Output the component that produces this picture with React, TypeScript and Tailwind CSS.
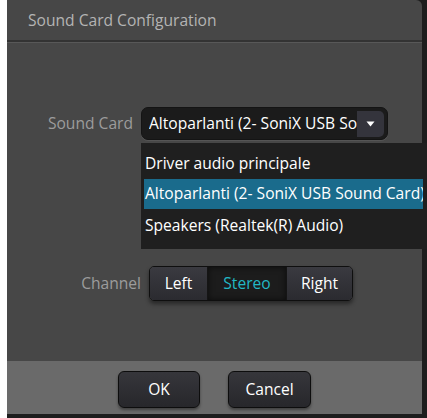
import React from "react";

const font = { fontFamily: '"Open Sans", "Noto Sans", sans-serif' };

function ComboBox() {
  return (
    <div className="relative">
      <div className="flex h-[33px] w-[247px] items-center rounded-[7px] border border-[#141414] bg-[#1b1b1b] pl-[7px] pr-[3px] shadow-[0_1px_0_#555]">
        <span className="flex-1 overflow-hidden whitespace-nowrap text-[15.6px] text-white">
          Altoparlanti (2- SoniX USB Sound Card)
        </span>
        <div className="flex h-[26px] w-[27px] shrink-0 items-center justify-center rounded-r-[5px] bg-[#34343c]">
          <svg width="9" height="6" viewBox="0 0 9 6">
            <path d="M0.5 0.5 H8.5 L4.5 5.5 Z" fill="#ffffff" />
          </svg>
        </div>
      </div>
      {/* open dropdown list */}
      <div className="absolute left-0 top-[36px] z-10 flex w-[290px] flex-col bg-[#1f1f1f] pt-[5px] pb-[6px] pl-[3px] text-[15.6px] text-white">
        <div className="flex h-[31px] items-center whitespace-nowrap pl-[1px]">Driver audio principale</div>
        <div className="flex h-[30px] w-[279px] items-center overflow-hidden whitespace-nowrap bg-[#1a6b8c] pl-[1px]">
          Altoparlanti (2- SoniX USB Sound Card)
        </div>
        <div className="flex h-[34px] items-center whitespace-nowrap pl-[1px]">Speakers (Realtek(R) Audio)</div>
      </div>
    </div>
  );
}

function Segment({ label, active, cls }: { label: string; active?: boolean; cls: string }) {
  return (
    <div
      className={
        "flex h-full items-center justify-center text-[15.6px] " +
        cls +
        (active
          ? " bg-[#1c1c1c] text-[#22b8c4] shadow-[inset_0_0_6px_rgba(0,0,0,0.6)]"
          : " bg-gradient-to-b from-[#3a3a40] to-[#2b2b30] text-white")
      }
    >
      {label}
    </div>
  );
}

export default function App() {
  return (
    <div className="h-[418px] w-[427px] overflow-hidden bg-white" style={font}>
      <div className="ml-[7px] flex h-full flex-col bg-[#1d1d1d]">
        <div className="mr-[5px] flex h-[414px] flex-col overflow-visible">
          {/* title bar */}
          <div className="flex h-[40px] shrink-0 items-center rounded-tr-[6px] bg-[#474747] pl-[21px] pt-[2px] text-[15.6px] text-[#b4b4b4]">
            Sound Card Configuration
          </div>
          <div className="h-[2px] shrink-0 bg-[#333333]" />
          <div className="h-[1px] shrink-0 bg-[#585858]" />
          {/* body */}
          <div className="flex flex-1 flex-col bg-[#474747]">
            <div className="mt-[64px] flex items-center">
              <div className="w-[134px] pr-[8px] text-right text-[15.6px] text-[#9c9c9c]">Sound Card</div>
              <ComboBox />
            </div>
            <div className="mt-[126px] flex items-center">
              <div className="w-[142px] pr-[8px] text-right text-[15.6px] text-[#9c9c9c]">Channel</div>
              <div className="flex h-[35px] w-[204px] overflow-hidden rounded-[5px] border border-[#0f0f0f] shadow-[0_3px_4px_rgba(0,0,0,0.45)]">
                <Segment label="Left" cls="w-[58px] border-r border-[#151515]" />
                <Segment label="Stereo" active cls="w-[78px]" />
                <Segment label="Right" cls="flex-1 border-l border-[#151515]" />
              </div>
            </div>
          </div>
          {/* footer */}
          <div className="flex h-[53px] shrink-0 items-start bg-[#6a6a6a] pl-[111px] pt-[10px]">
            <button className="h-[37px] w-[82px] rounded-[6px] border border-[#0d0d0d] bg-gradient-to-b from-[#36363b] to-[#27272b] text-[15.6px] text-white shadow-[0_2px_3px_rgba(0,0,0,0.4)]">
              OK
            </button>
            <button className="ml-[28px] h-[37px] w-[83px] rounded-[6px] border border-[#0d0d0d] bg-gradient-to-b from-[#36363b] to-[#27272b] text-[15.6px] text-white shadow-[0_2px_3px_rgba(0,0,0,0.4)]">
              Cancel
            </button>
          </div>
        </div>
      </div>
    </div>
  );
}
